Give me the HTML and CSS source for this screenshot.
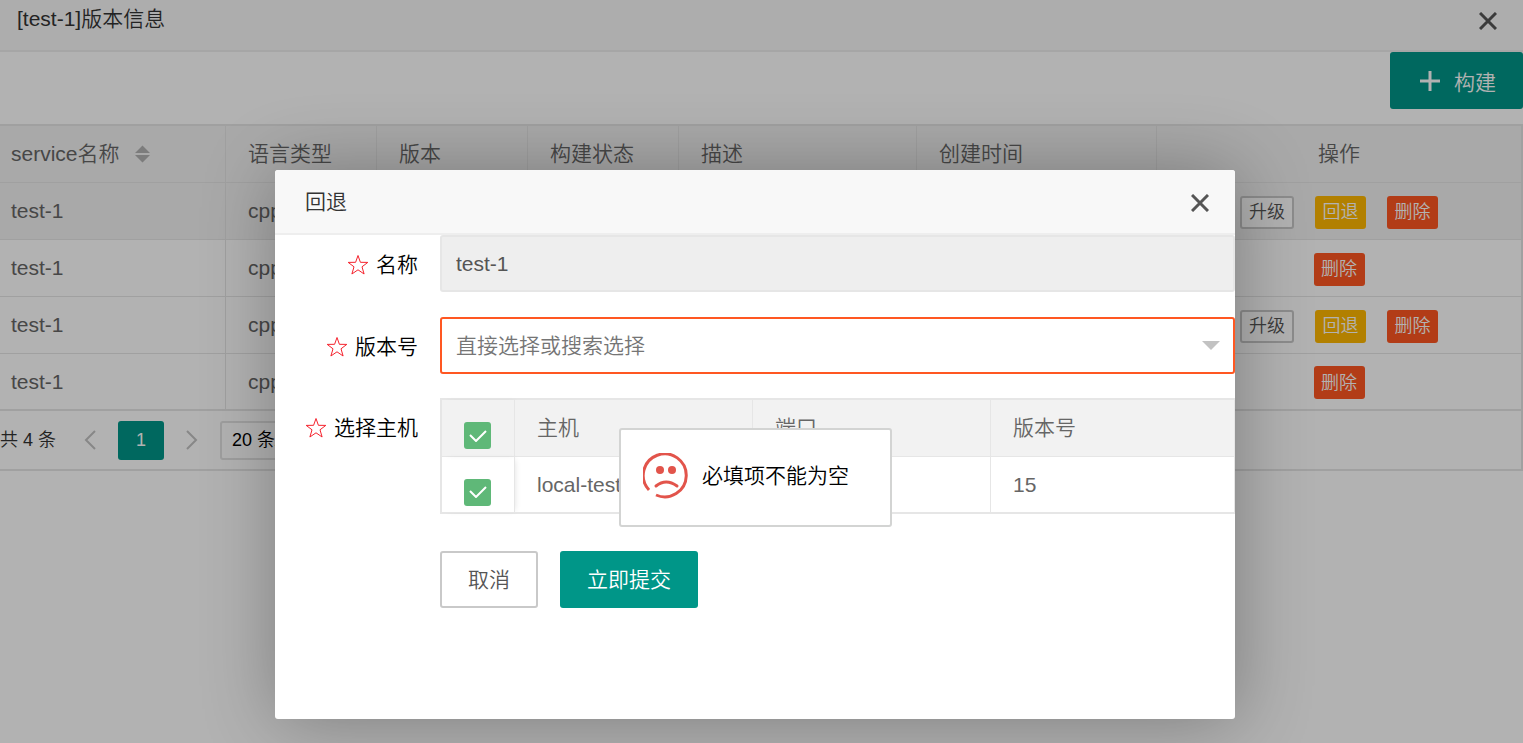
FILE: index.html
```html
<!DOCTYPE html>
<html lang="zh-CN">
<head>
<meta charset="utf-8">
<title>[test-1]版本信息</title>
<link rel="stylesheet" href="styles.css">
</head>
<body>
<main class="page">
  <header class="page-head">
    <h1 class="page-title">[test-1]版本信息</h1>
    <button class="close" type="button" aria-label="关闭"><svg width="18" height="18" viewBox="0 0 18 18"><path d="M1 1L17 17M17 1L1 17"/></svg></button>
  </header>
  <div class="toolbar">
    <button class="btn btn-build" type="button"><svg width="20" height="20" viewBox="0 0 20 20"><path d="M10 0V20M0 10H20"/></svg>构建</button>
  </div>
  <section class="list">
    <table class="grid versions">
      <colgroup><col class="c-name"><col class="c-short"><col class="c-short"><col class="c-short"><col class="c-desc"><col class="c-time"><col></colgroup>
      <thead>
        <tr><th><span class="sortable">service名称<svg class="sort" width="15" height="18" viewBox="0 0 16 18"><path d="M0 8L8 0L16 8ZM0 10H16L8 18Z"/></svg></span></th><th>语言类型</th><th>版本</th><th>构建状态</th><th>描述</th><th>创建时间</th><th class="center">操作</th></tr>
      </thead>
      <tbody>
        <tr class="hover"><td>test-1</td><td>cpp</td><td></td><td></td><td></td><td></td><td><div class="actions"><button class="mini plain" type="button">升级</button><button class="mini warm" type="button">回退</button><button class="mini danger" type="button">删除</button></div></td></tr>
        <tr><td>test-1</td><td>cpp</td><td></td><td></td><td></td><td></td><td><div class="actions"><button class="mini danger" type="button">删除</button></div></td></tr>
        <tr><td>test-1</td><td>cpp</td><td></td><td></td><td></td><td></td><td><div class="actions"><button class="mini plain" type="button">升级</button><button class="mini warm" type="button">回退</button><button class="mini danger" type="button">删除</button></div></td></tr>
        <tr><td>test-1</td><td>cpp</td><td></td><td></td><td></td><td></td><td><div class="actions"><button class="mini danger" type="button">删除</button></div></td></tr>
      </tbody>
    </table>
    <nav class="pager" aria-label="分页">
      <span class="total">共 4 条</span>
      <button class="page-arrow" type="button" aria-label="上一页"><svg width="12" height="20" viewBox="0 0 12 20"><path d="M11 1L2 10L11 19"/></svg></button>
      <button class="page-current" type="button">1</button>
      <button class="page-arrow" type="button" aria-label="下一页"><svg width="12" height="20" viewBox="0 0 12 20"><path d="M1 1L10 10L1 19"/></svg></button>
      <select class="page-size" aria-label="每页条数"><option>20 条/页</option></select>
    </nav>
  </section>
</main>

<div class="shade"></div>

<div class="dialog" role="dialog" aria-labelledby="dialog-title">
  <header class="dialog-head">
    <h2 class="dialog-title" id="dialog-title">回退</h2>
    <button class="close" type="button" aria-label="关闭"><svg width="18" height="18" viewBox="0 0 18 18"><path d="M1 1L17 17M17 1L1 17"/></svg></button>
  </header>
  <form class="form">
    <div class="field">
      <label class="label" for="name"><svg class="star" width="22" height="22" viewBox="0 0 22 22"><path d="M11 1.5L13.4 8.3L20.8 8.4L15 12.8L17.1 20L11 15.8L4.9 20L7 12.8L1.2 8.4L8.6 8.3Z"/></svg>名称</label>
      <input class="control" id="name" type="text" value="test-1" readonly>
    </div>
    <div class="field">
      <label class="label" for="version"><svg class="star" width="22" height="22" viewBox="0 0 22 22"><path d="M11 1.5L13.4 8.3L20.8 8.4L15 12.8L17.1 20L11 15.8L4.9 20L7 12.8L1.2 8.4L8.6 8.3Z"/></svg>版本号</label>
      <div class="select-wrap">
        <select class="control invalid" id="version"><option>直接选择或搜索选择</option></select>
        <svg class="caret" width="18" height="9" viewBox="0 0 18 9"><path d="M0 0H18L9 9Z"/></svg>
      </div>
    </div>
    <div class="field">
      <span class="label" id="hosts-label"><svg class="star" width="22" height="22" viewBox="0 0 22 22"><path d="M11 1.5L13.4 8.3L20.8 8.4L15 12.8L17.1 20L11 15.8L4.9 20L7 12.8L1.2 8.4L8.6 8.3Z"/></svg>选择主机</span>
      <table class="grid hosts" aria-labelledby="hosts-label">
        <colgroup><col class="c-check"><col class="c-host"><col class="c-host"><col></colgroup>
        <thead>
          <tr><th><span class="check"><input type="checkbox" checked aria-label="全选"><svg width="18" height="12" viewBox="0 0 18 12"><path d="M1 5L7 11L17 1"/></svg></span></th><th>主机</th><th>端口</th><th>版本号</th></tr>
        </thead>
        <tbody>
          <tr><td><span class="check"><input type="checkbox" checked aria-label="local-test"><svg width="18" height="12" viewBox="0 0 18 12"><path d="M1 5L7 11L17 1"/></svg></span></td><td>local-test</td><td></td><td>15</td></tr>
        </tbody>
      </table>
    </div>
    <div class="buttons">
      <button class="btn btn-cancel" type="button">取消</button>
      <button class="btn btn-submit" type="button">立即提交</button>
    </div>
  </form>
</div>

<div class="toast" role="alert">
  <svg class="face" width="46" height="46" viewBox="0 0 46 46">
    <path class="ring" d="M6 37A21.500 21.500 0 1 1 13 42"/>
    <circle cx="17" cy="17" r="4"/><circle cx="29" cy="17" r="4"/>
    <path class="mouth" d="M13 33Q23 25 34 33"/>
  </svg>
  <span>必填项不能为空</span>
</div>
</body>
</html>
```
FILE: styles.css
```css
* { box-sizing: border-box; }

body {
  margin: 0;
  min-height: 100vh;
  position: relative;
  overflow: hidden;
  background: #fff;
  color: #666;
  font: 350 21px/30px "Liberation Sans", "Noto Sans CJK SC", sans-serif;
}

button, input, select { font: inherit; color: inherit; margin: 0; }
button { padding: 0; border: 0; background: none; cursor: pointer; }
h1, h2 { margin: 0; font: inherit; color: #333; }
svg { display: block; flex: none; }

/* Page */
.page-head {
  display: flex;
  align-items: flex-start;
  justify-content: space-between;
  height: 52px;
  padding: 4px 26px 0 17px;
  background: #f8f8f8;
  border-bottom: 2px solid #eee;
}
.close { padding: 8px 0; }
.close svg { fill: none; stroke: #555; stroke-width: 3; }

.toolbar { display: flex; justify-content: flex-end; height: 72px; }

.btn {
  display: inline-flex;
  align-items: center;
  justify-content: center;
  height: 57px;
  padding: 0 27px;
  border-radius: 3px;
  background: #009688;
  color: #fff;
}
.btn-build { gap: 14px; padding: 4px 27px 0 30px; }
.btn-build svg { fill: none; stroke: #fff; stroke-width: 3; margin-bottom: 4px; }

.list {
  border: 2px solid #e6e6e6;
  border-left: 0;
}
.grid {
  width: 100%;
  table-layout: fixed;
  border-collapse: separate;
  border-spacing: 0;
}
.grid th, .grid td {
  height: 57px;
  padding: 0 22px;
  border-right: 1px solid #e6e6e6;
  border-bottom: 1px solid #e6e6e6;
  text-align: left;
  font-weight: inherit;
  white-space: nowrap;
}
.grid th { background: #f2f2f2; }
.grid tbody tr:last-child td { height: 56px; }
.grid th:last-child, .grid td:last-child { border-right: 0; }
.grid th.center { text-align: center; }
.versions th:first-child, .versions td:first-child { padding-left: 11px; }
.versions td:last-child { padding: 2px 0 0; }
.grid .hover { background: #f2f2f2; }
.c-name { width: 226px; }
.c-short { width: 151px; }
.c-desc { width: 238px; }
.c-time { width: 240px; }

.sortable { display: flex; align-items: center; gap: 15px; }
.sort { fill: #b2b2b2; }

.actions { display: flex; justify-content: center; gap: 21px; }
.mini {
  min-width: 51px;
  height: 33px;
  border-radius: 3px;
  font-size: 18px;
  line-height: 30px;
  color: #fff;
}
.plain { min-width: 54px; border: 2px solid #c9c9c9; background: #fff; color: #555; line-height: 28px; }
.warm { background: #ffb800; }
.danger { background: #ff5722; }

.pager {
  display: flex;
  align-items: center;
  height: 59px;
  border-top: 1px solid #e6e6e6;
  font-size: 18px;
  color: #333;
}
.total { margin-right: 6px; }
.page-arrow { padding: 0 22px; }
.page-arrow svg { fill: none; stroke: #c2c2c2; stroke-width: 2; }
.page-current { width: 46px; height: 39px; border-radius: 3px; background: #009688; color: #fff; }
.page-size {
  appearance: none;
  width: 120px;
  height: 39px;
  padding: 0 10px;
  border: 2px solid #e2e2e2;
  border-radius: 3px;
  background: #fff;
  color: #000;
}

/* Dialog */
.shade { position: absolute; inset: 0; background: rgba(0, 0, 0, .3); }

.dialog {
  position: absolute;
  left: 275px;
  top: 170px;
  width: 960px;
  padding-bottom: 111px;
  border-radius: 3px;
  background: #fff;
  box-shadow: 2px 2px 75px rgba(0, 0, 0, .3);
}
.dialog-head {
  display: flex;
  align-items: center;
  justify-content: space-between;
  height: 65px;
  padding: 0 26px 0 30px;
  border-bottom: 2px solid #eee;
  border-radius: 3px 3px 0 0;
  background: #f8f8f8;
}
.dialog-head .close { padding: 11px 0 8px; }

.form { display: grid; color: #000; }
.field { display: grid; grid-template-columns: 165px 1fr; align-items: start; margin-bottom: 25px; }
.field + .field { margin-bottom: 24px; }
.label {
  display: flex;
  align-items: center;
  justify-content: flex-end;
  gap: 7px;
  height: 57px;
  padding: 2px 22px 0 0;
}
.star { fill: none; stroke: #f5222d; stroke-width: 1; }

.control {
  display: block;
  appearance: none;
  width: 100%;
  height: 57px;
  padding: 0 14px;
  border: 2px solid #e6e6e6;
  border-radius: 3px;
  outline: 0;
  background: #fff;
  color: #757575;
}
.control[readonly] { background: #eee; color: #555; }
.control.invalid { border-color: #ff5722; }
.select-wrap { position: relative; }
.caret { position: absolute; right: 15px; top: 24px; fill: #c2c2c2; pointer-events: none; }

.hosts { border: 2px solid #e6e6e6; border-width: 2px 1px 1px 2px; color: #666; }
.c-check { width: 73px; }
.c-host { width: 238px; }
.hosts th:first-child, .hosts td:first-child { box-shadow: 3px 0 6px -3px rgba(0, 0, 0, .12); }
.check { position: relative; display: grid; place-items: center; width: 27px; margin-top: 15px; }
.check input { appearance: none; width: 27px; height: 27px; border-radius: 3px; background: #5fb878; }
.check svg { position: absolute; fill: none; stroke: #fff; stroke-width: 2; pointer-events: none; }

.buttons { display: flex; gap: 22px; padding: 13px 0 0 165px; }
.btn-cancel { padding: 0 26px; border: 2px solid #c9c9c9; background: #fff; color: #555; }

/* Message */
.toast {
  position: absolute;
  left: 619px;
  top: 428px;
  display: flex;
  align-items: center;
  gap: 13px;
  height: 99px;
  padding: 0 41px 4px 22px;
  border: 2px solid #d3d4d3;
  border-radius: 3px;
  background: #fff;
  color: #000;
}
.face { fill: #e2544b; }
.face .ring, .face .mouth { fill: none; stroke: #e2544b; stroke-width: 3; }
.face .mouth { stroke-linecap: round; }
```
